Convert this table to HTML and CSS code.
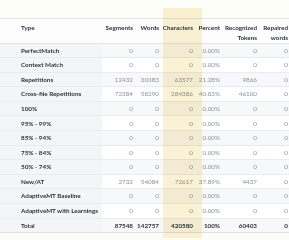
FILE: index.html
```html
<!DOCTYPE html>
<html>
<head>
<meta charset="utf-8">
<link rel="stylesheet" href="styles.css">
</head>
<body>
<div class="page">
  <div class="col-highlight"></div>
  <div class="panel">
    <table class="report">
      <colgroup>
        <col class="c-type"><col class="c-seg"><col class="c-words"><col class="c-chars"><col class="c-pct"><col class="c-rec"><col class="c-rep">
      </colgroup>
      <thead>
        <tr>
          <th class="type">Type</th>
          <th>Segments</th>
          <th>Words</th>
          <th>Characters</th>
          <th>Percent</th>
          <th>Recognized<br>Tokens</th>
          <th>Repaired<br>words</th>
        </tr>
      </thead>
      <tbody>
        <tr><td class="type">PerfectMatch</td><td>0</td><td>0</td><td>0</td><td>0.00%</td><td>0</td><td>0</td></tr>
        <tr><td class="type">Context Match</td><td>0</td><td>0</td><td>0</td><td>0.00%</td><td>0</td><td>0</td></tr>
        <tr><td class="type">Repetitions</td><td>12432</td><td>30383</td><td>63577</td><td>21.28%</td><td>9866</td><td>0</td></tr>
        <tr><td class="type">Cross-file Repetitions</td><td>72384</td><td>58290</td><td>284386</td><td>40.83%</td><td>46100</td><td>0</td></tr>
        <tr><td class="type">100%</td><td>0</td><td>0</td><td>0</td><td>0.00%</td><td>0</td><td>0</td></tr>
        <tr><td class="type">95% - 99%</td><td>0</td><td>0</td><td>0</td><td>0.00%</td><td>0</td><td>0</td></tr>
        <tr><td class="type">85% - 94%</td><td>0</td><td>0</td><td>0</td><td>0.00%</td><td>0</td><td>0</td></tr>
        <tr><td class="type">75% - 84%</td><td>0</td><td>0</td><td>0</td><td>0.00%</td><td>0</td><td>0</td></tr>
        <tr><td class="type">50% - 74%</td><td>0</td><td>0</td><td>0</td><td>0.00%</td><td>0</td><td>0</td></tr>
        <tr><td class="type">New/AT</td><td>2732</td><td>54084</td><td>72617</td><td>37.89%</td><td>4437</td><td>0</td></tr>
        <tr><td class="type">AdaptiveMT Baseline</td><td>0</td><td>0</td><td>0</td><td>0.00%</td><td>0</td><td>0</td></tr>
        <tr><td class="type">AdaptiveMT with Learnings</td><td>0</td><td>0</td><td>0</td><td>0.00%</td><td>0</td><td>0</td></tr>
        <tr class="total"><td class="type">Total</td><td>87548</td><td>142757</td><td>420580</td><td>100%</td><td>60403</td><td>0</td></tr>
      </tbody>
    </table>
  </div>
</div>
</body>
</html>
```

FILE: styles.css
```css
html, body {
  margin: 0;
  padding: 0;
  width: 289px;
  height: 240px;
  overflow: hidden;
  background: #ffffff;
}

.page {
  position: relative;
  width: 289px;
  height: 240px;
  padding-top: 18px;
  background: #fdfdf8;
  box-sizing: border-box;
  font-family: Lato, "Open Sans", sans-serif;
}

.panel {
  background: #f3f5f7;
  border-top: 1px solid #e1e5ea;
  width: 300px;
}

.report {
  border-collapse: collapse;
  table-layout: fixed;
  width: 291px;
  font-size: 6.3px;
  line-height: 9.5px;
}

.c-type { width: 102px; }
.c-seg { width: 34px; }
.c-words { width: 26px; }
.c-chars { width: 34px; }
.c-pct { width: 27px; }
.c-rec { width: 37px; }
.c-rep { width: 31px; }

.report thead tr {
  background: #fdfdfd;
}

.report th {
  height: 24px;
  padding: 4px 3px 0 0;
  vertical-align: top;
  text-align: right;
  font-weight: 700;
  color: #2e3338;
  white-space: nowrap;
  border-bottom: 1px solid #e1e5ea;
  box-sizing: border-box;
}

.report th.type,
.report td.type {
  text-align: left;
  padding-left: 21px;
}

.report td {
  height: 14.6px;
  padding: 0 3px 0 0;
  text-align: right;
  color: #8d9298;
  white-space: nowrap;
  border-bottom: 1px solid #e8ebef;
  box-sizing: border-box;
  background: #ffffff;
}

.report tbody tr:nth-child(odd) td {
  background: #f6f8fa;
}

.report td.type {
  font-weight: 700;
  color: #2e3338;
  background: #f3f5f7;
}

.report tbody tr:nth-child(odd) td.type {
  background: #f3f5f7;
}

.report tr.total td {
  font-weight: 700;
  color: #2e3338;
  background: #eef1f5;
  border-top: 1px solid #c9d0d8;
  border-bottom: 1px solid #dfe3e8;
}

.col-highlight {
  position: absolute;
  left: 163px;
  top: 8px;
  width: 39px;
  height: 230px;
  background: #fbf2d6;
  mix-blend-mode: multiply;
  z-index: 2;
  pointer-events: none;
}
```
